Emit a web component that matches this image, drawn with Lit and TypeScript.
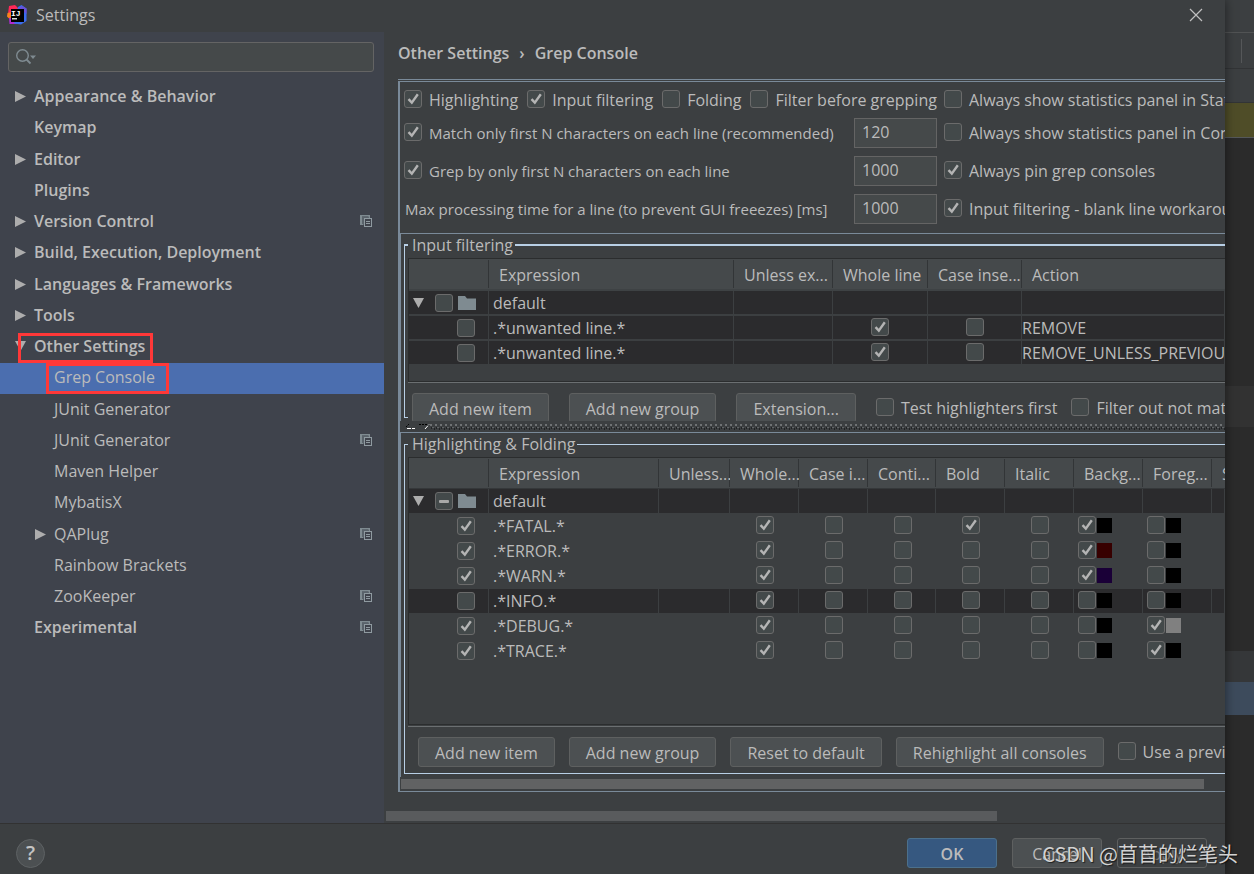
import { LitElement, html, css, svg, nothing } from "lit";
import { customElement } from "lit/decorators.js";
import { classMap } from "lit/directives/class-map.js";

interface TreeItem {
  label: string;
  child?: boolean;
  arrow?: "right" | "down";
  project?: boolean;
  selected?: boolean;
  mark?: "section" | "page";
}

const TREE: TreeItem[] = [
  { label: "Appearance & Behavior", arrow: "right" },
  { label: "Keymap" },
  { label: "Editor", arrow: "right" },
  { label: "Plugins" },
  { label: "Version Control", arrow: "right", project: true },
  { label: "Build, Execution, Deployment", arrow: "right" },
  { label: "Languages & Frameworks", arrow: "right" },
  { label: "Tools", arrow: "right" },
  { label: "Other Settings", arrow: "down", mark: "section" },
  { label: "Grep Console", child: true, selected: true, mark: "page" },
  { label: "JUnit Generator", child: true },
  { label: "JUnit Generator", child: true, project: true },
  { label: "Maven Helper", child: true },
  { label: "MybatisX", child: true },
  { label: "QAPlug", child: true, arrow: "right", project: true },
  { label: "Rainbow Brackets", child: true },
  { label: "ZooKeeper", child: true, project: true },
  { label: "Experimental", project: true },
];

const FILTER_HEADS = ["", "Expression", "Unless ex...", "Whole line", "Case inse...", "Action"];
const FILTER_ROWS = [
  { expression: ".*unwanted line.*", action: "REMOVE" },
  { expression: ".*unwanted line.*", action: "REMOVE_UNLESS_PREVIOUSLY_MATCHED" },
];

const HIGHLIGHT_HEADS = [
  "", "Expression", "Unless...", "Whole...", "Case i...", "Conti...",
  "Bold", "Italic", "Backg...", "Foreg...", "Status...",
];

interface HighlightRow {
  expression: string;
  on: boolean;
  bold?: boolean;
  back?: string;
  fore?: string;
}

const HIGHLIGHT_ROWS: HighlightRow[] = [
  { expression: ".*FATAL.*", on: true, bold: true, back: "#000000" },
  { expression: ".*ERROR.*", on: true, back: "#370000" },
  { expression: ".*WARN.*", on: true, back: "#1a0037" },
  { expression: ".*INFO.*", on: false },
  { expression: ".*DEBUG.*", on: true, fore: "#808080" },
  { expression: ".*TRACE.*", on: true, fore: "#000000" },
];

const arrowIcon = (dir?: "right" | "down") => html`
  <svg class="arrow" width="11" height="11" viewBox="0 0 11 11" aria-hidden="true">
    ${dir === "right"
      ? svg`<path d="M0 0 L11 5.5 L0 11 Z" fill="#adadad" />`
      : dir === "down"
        ? svg`<path d="M0 0 H11 L5.5 10 Z" fill="#adadad" />`
        : nothing}
  </svg>`;

const projectIcon = () => html`
  <svg class="project" width="12" height="12" viewBox="0 0 12 12" aria-hidden="true">
    <path d="M0 0 H10 V3 H8.5 V1.5 H2 V8.5 H3 V10 H0 Z" fill="#7f8b91" />
    <path d="M2 2 H8.5 V3 H4 V10 H3 V8.5 H2 Z" fill="#59626a" />
    <rect x="4.5" y="3.5" width="7" height="8" fill="none" stroke="#8f9aa0" />
    <path d="M6 6.5 H10 M6 8.5 H10" stroke="#8f9aa0" />
  </svg>`;

const folderIcon = html`
  <svg class="folder" width="18" height="14" viewBox="0 0 18 14" aria-hidden="true">
    <path d="M0 0 H7 L9 2.5 H18 V14 H0 Z" fill="#7f8b91" />
  </svg>`;

const logoIcon = html`
  <svg class="logo" width="20" height="20" viewBox="0 0 20 20" aria-hidden="true">
    <path d="M2 1 L8 0 L12 4 L6 12 L1 9 Z" fill="#fe2857" />
    <path d="M0.5 8 L5 7 L6 14 L3 14.5 L0 11.5 Z" fill="#fc801d" />
    <path d="M2 13 L8 12 L10 19 L2.5 19 Z" fill="#b02bd0" />
    <path d="M11 2 L14.5 0 L19.5 3.5 V16 L14 19.5 L7 18.5 Z" fill="#3b6cf0" />
    <path d="M12 3 L15 1 L19.5 3.5 V9 Z" fill="#6a50d8" />
    <rect x="4" y="4" width="13" height="13" fill="#000" />
    <text x="4" y="11" font-family="Liberation Mono, monospace" font-size="8" font-weight="700" fill="#fff">IJ</text>
    <rect x="5" y="13" width="5" height="1.5" fill="#d8d8d8" />
  </svg>`;

@customElement("app-root")
export class AppRoot extends LitElement {
  static styles = css`
    :host {
      display: block;
      font-family: "Open Sans", "Noto Sans", "Noto Sans CJK SC", sans-serif;
      font-size: 16px;
      line-height: 22px;
      color: #bbbbbb;
    }
    * { box-sizing: border-box; }
    .stage {
      position: relative;
      display: grid;
      grid-template-columns: minmax(0, 1fr) 29px;
      min-height: 100vh;
      background: #2b2b2b;
      overflow: hidden;
    }
    .dialog {
      display: flex;
      flex-direction: column;
      background: #3c3f41;
      z-index: 1;
      box-shadow: 0 0 10px rgba(0, 0, 0, 0.5);
    }

    .titlebar {
      display: flex;
      align-items: center;
      height: 32px;
      padding: 0 22px 2px 7px;
      gap: 9px;
      flex: none;
    }
    .titlebar h1 { flex: 1; margin: 0; font-size: 16px; font-weight: 400; }
    .close { border: 0; background: none; padding: 0; width: 14px; height: 14px; display: block; }
    .close svg { display: block; }

    .body { flex: 1; display: flex; min-height: 0; }
    .sidebar { width: 384px; flex: none; background: #3f434c; padding-top: 10px; }
    .search {
      display: flex;
      align-items: center;
      height: 30px;
      margin: 0 10px 10px 8px;
      padding-left: 7px;
      border: 1px solid #646464;
      border-radius: 3px;
      background: #45494a;
    }
    .search input { flex: 1; min-width: 0; border: 0; outline: 0; background: none; color: inherit; font: inherit; }

    .tree { list-style: none; margin: 0; padding: 0; }
    .node {
      position: relative;
      display: flex;
      align-items: center;
      gap: 8px;
      height: 31px;
      padding: 0 12px 3px 15px;
      font-weight: 600;
    }
    .node:nth-child(4n + 3) { margin-top: 1px; }
    .node.child { padding-left: 35px; font-weight: 400; }
    .node.selected { background: #4b6eaf; }
    .node .text { flex: 1; }
    .mark { position: absolute; border: 3px solid #ff3838; }
    .mark.section { left: 18px; top: 1px; width: 135px; height: 30px; }
    .mark.page { left: 46px; top: 0; width: 123px; height: 31px; }

    .content { flex: 1; min-width: 0; display: flex; flex-direction: column; }
    .crumbs {
      display: flex;
      gap: 10px;
      height: 47px;
      padding: 10px 0 0 14px;
      font-weight: 600;
    }
    .frame {
      flex: 1;
      display: flex;
      flex-direction: column;
      margin-left: 14px;
      border-top: 1px solid #7a8a99;
      padding-top: 1px;
      white-space: nowrap;
      overflow: hidden;
    }
    .inner {
      flex: 1;
      display: flex;
      flex-direction: column;
      border: solid #7a8a99;
      border-width: 1px 0 1px 2px;
    }

    .check {
      appearance: none;
      flex: none;
      display: block;
      width: 18px;
      height: 18px;
      margin: 0;
      border: 1px solid #6b6b6b;
      border-radius: 3px;
      background: #43494a center / 16px 16px no-repeat;
    }
    .check:checked {
      background-image: url("data:image/svg+xml,%3Csvg xmlns='http://www.w3.org/2000/svg' viewBox='0 0 16 16'%3E%3Cpath d='M3.5 8.2 L6.8 11.6 L12.8 3.2' fill='none' stroke='%23b4b4b4' stroke-width='2.4'/%3E%3C/svg%3E");
    }
    .check:indeterminate {
      background-image: url("data:image/svg+xml,%3Csvg xmlns='http://www.w3.org/2000/svg' viewBox='0 0 16 16'%3E%3Crect x='3' y='7' width='10' height='3' rx='1' fill='%23a8a8a8'/%3E%3C/svg%3E");
    }
    .option { display: flex; align-items: center; gap: 7px; }
    .option .check { margin-bottom: 2px; }

    .options {
      display: grid;
      grid-template-columns: 443px 83px minmax(0, 1fr);
      grid-template-rows: 28px;
      grid-auto-rows: 30px;
      gap: 8px 7px;
      align-items: center;
      padding: 0 0 9px 4px;
    }
    .options .wide { grid-column: span 2; display: flex; gap: 9px; padding-top: 7px; }
    .options .wide + .option { padding-top: 7px; }
    .options .small { font-size: 15px; }
    .options .plain { padding-left: 1px; }
    .number {
      width: 83px;
      height: 30px;
      padding: 0 7px 2px;
      border: 1px solid #646464;
      outline: 0;
      background: #45494a;
      color: inherit;
      font: inherit;
    }

    .panel {
      display: flex;
      flex-direction: column;
      border: solid #7a8a99;
      border-width: 1px 0 0 1px;
      padding-left: 3px;
      overflow: hidden;
    }
    .panel.upper { height: 188px; flex: none; }
    .panel.lower { flex: 1; padding-bottom: 3px; }
    fieldset {
      display: flex;
      flex-direction: column;
      min-width: 0;
      margin: 0;
      padding: 0 0 0 3px;
      border: solid #b8cfe5;
      border-width: 1px 0 1px 1px;
    }
    .upper fieldset { height: 184px; border-top-width: 2px; }
    .lower fieldset { flex: 1; }
    legend { margin: 0; padding: 0 2px 0 4px; }

    .grid-box {
      margin-top: 2px;
      border: solid #2b2d2e;
      border-width: 1px 0 1px 1px;
      overflow: hidden;
      flex: none;
    }
    .upper .grid-box { height: 124px; }
    .lower .grid-box { flex: 1; }
    table { width: 100%; table-layout: fixed; border-collapse: separate; border-spacing: 0; }
    th {
      height: 31px;
      padding: 2px 0 0 10px;
      font-weight: 400;
      text-align: left;
      overflow: hidden;
      background: linear-gradient(#323537, #323537) right 1px / 1px 28px no-repeat, #45494b;
      border-bottom: 1px solid #35383a;
    }
    th:last-child { background: #45494b; }
    .upper th { height: 32px; border-bottom: 2px solid #3e4244; }
    td {
      height: 25px;
      padding: 0 0 1px;
      overflow: hidden;
      border-right: 1px solid #3c3f41;
      border-bottom: 1px solid #3c3f41;
    }
    .upper td, .lower .dark td { background: #2b2b2d; }
    .upper td { border-bottom-width: 2px; padding: 0; }
    .upper td, .lower td.name { line-height: 22px; }
    td.name, .upper td.name { padding-left: 4px; }
    td > .check { margin: 0 auto 2px; }
    .lower td > .check { margin: 0 auto 2px 26px; }
    .lead { display: flex; align-items: center; padding: 1px 0 0 4px; }
    .lead .check { margin: 0 5px 0 11px; }
    .lead.leaf { padding-left: 48px; }
    .lead.leaf .check { margin: 0; }
    .tone { display: flex; align-items: center; gap: 1px; padding: 0 0 1px 4px; }
    .swatch { width: 15px; height: 15px; }

    .actions {
      display: flex;
      align-items: center;
      background: #3c3f41;
      border-top: 1px solid #6b6f71;
      padding-top: 10px;
      flex: none;
    }
    .upper .actions { gap: 20px; padding-left: 4px; }
    .upper .actions .option + .option { margin-left: -6px; }
    .lower .actions { gap: 14px; margin-top: 1px; padding: 10px 0 6px 10px; }
    .button {
      flex: none;
      height: 30px;
      padding: 2px 16px 0;
      border: 1px solid #5e6060;
      border-radius: 3px;
      background: #4c5052;
      color: inherit;
      font: inherit;
    }

    .splitter { display: flex; height: 11px; flex: none; padding: 3px 0 2px 4px; }
    .bumps {
      flex: 1;
      height: 6px;
      background: url("data:image/svg+xml,%3Csvg xmlns='http://www.w3.org/2000/svg' width='5' height='6' shape-rendering='crispEdges'%3E%3Cpath d='M0 0h2v2h-2z' fill='%236f7274'/%3E%3Cpath d='M2 3h2v1h-2z' fill='%23616466'/%3E%3Cpath d='M1 3h1v2h-1zM4 4h1v2h-1z' fill='%23202224'/%3E%3C/svg%3E");
    }

    .thumb { height: 10px; background: #616263; }
    .thumb.inside { margin: 2px 21px 2px 1px; }
    .thumb.outside { width: 611px; max-width: 73%; margin: 19px 0 2px 2px; background: #595b5d; }

    .footer {
      display: flex;
      align-items: center;
      gap: 15px;
      height: 51px;
      flex: none;
      padding: 8px 18px 0 16px;
      border-top: 1px solid #323232;
    }
    .help {
      width: 29px;
      height: 29px;
      margin-right: auto;
      padding: 0;
      border: 1px solid #5e6264;
      border-radius: 50%;
      background: #4c5052;
      color: #c4c4c4;
      font: inherit;
      font-size: 20px;
      font-weight: 600;
      line-height: 26px;
    }
    .footer .button { width: 90px; padding: 2px 0 0; }
    .button.primary { background: #365880; border-color: #4c708c; font-weight: 600; }
    .button:disabled { background: #3c3f41; color: #777777; }

    .ide { display: flex; flex-direction: column; }
    .band { flex: none; border-bottom: 1px solid #323436; background: #3c3f41; }
    .band.menu { height: 33px; border-color: #515354; }
    .band.tools { height: 36px; padding: 6px 0 0 16px; }
    .band.tools i { display: block; width: 1px; height: 24px; background: #555759; }
    .band.tabs { height: 34px; }
    .band.tab { height: 35px; background: #4f4d28; border-color: #55585a; }
    .band.gap { height: 248px; background: none; border: 0; }
    .band.line { height: 41px; background: #323232; border: 0; }
    .band.code { height: 224px; background: none; border: 0; }
    .band.head { height: 31px; background: #353739; border: 0; }
    .band.row { height: 33px; background: #3d4b5c; border: 0; }

    .watermark {
      position: absolute;
      right: 16px;
      bottom: 6px;
      z-index: 2;
      margin: 0;
      font-family: "Noto Sans CJK SC", sans-serif;
      font-size: 20px;
      line-height: 28px;
      color: #d2d2d2;
      text-shadow: 1px 1px 1px rgba(0, 0, 0, 0.6);
      white-space: nowrap;
    }
  `;

  private check(label: string, on = false, mixed = false) {
    return html`<input class="check" type="checkbox" aria-label=${label} .checked=${on} .indeterminate=${mixed} />`;
  }

  private option(label: string, on = false, small = false) {
    return html`<label class=${classMap({ option: true, small })}>
      <input class="check" type="checkbox" .checked=${on} />${label}
    </label>`;
  }

  private columns(widths: number[]) {
    return html`<colgroup>${widths.map((w) => html`<col style="width:${w}px" />`)}<col /></colgroup>`;
  }

  private tone(label: string, color?: string) {
    return html`<div class="tone">
      ${this.check(label, color !== undefined)}
      <span class="swatch" style="background:${color ?? "#000000"}"></span>
    </div>`;
  }

  private renderNode(n: TreeItem) {
    return html`<li class=${classMap({ node: true, child: !!n.child, selected: !!n.selected })}>
      ${arrowIcon(n.arrow)}
      <span class="text">${n.label}</span>
      ${n.project ? projectIcon() : nothing}
      ${n.mark ? html`<span class="mark ${n.mark}"></span>` : nothing}
    </li>`;
  }

  private renderFilters() {
    return html`<table>
      ${this.columns([80, 245, 99, 95, 94])}
      <thead><tr>${FILTER_HEADS.map((h) => html`<th>${h}</th>`)}</tr></thead>
      <tbody>
        <tr>
          <td><div class="lead">${arrowIcon("down")}${this.check("default")}${folderIcon}</div></td>
          <td class="name">default</td><td></td><td></td><td></td><td></td>
        </tr>
        ${FILTER_ROWS.map((r) => html`<tr>
          <td><div class="lead leaf">${this.check("Enabled")}</div></td>
          <td class="name">${r.expression}</td>
          <td></td>
          <td>${this.check("Whole line", true)}</td>
          <td>${this.check("Case insensitive")}</td>
          <td>${r.action}</td>
        </tr>`)}
      </tbody>
    </table>`;
  }

  private renderHighlights() {
    return html`<table>
      ${this.columns([80, 170, 71, 69, 69, 68, 69, 69, 69, 69])}
      <thead><tr>${HIGHLIGHT_HEADS.map((h) => html`<th>${h}</th>`)}</tr></thead>
      <tbody>
        <tr class="dark">
          <td><div class="lead">${arrowIcon("down")}${this.check("default", false, true)}${folderIcon}</div></td>
          <td class="name">default</td>
          ${HIGHLIGHT_HEADS.slice(2).map(() => html`<td></td>`)}
        </tr>
        ${HIGHLIGHT_ROWS.map((r) => html`<tr class=${r.on ? "" : "dark"}>
          <td><div class="lead leaf">${this.check("Enabled", r.on)}</div></td>
          <td class="name">${r.expression}</td>
          <td></td>
          <td>${this.check("Whole line", true)}</td>
          <td>${this.check("Case insensitive")}</td>
          <td>${this.check("Continue matching")}</td>
          <td>${this.check("Bold", !!r.bold)}</td>
          <td>${this.check("Italic")}</td>
          <td>${this.tone("Background", r.back)}</td>
          <td>${this.tone("Foreground", r.fore)}</td>
          <td></td>
        </tr>`)}
      </tbody>
    </table>`;
  }

  render() {
    return html`<div class="stage">
      <section class="dialog">
        <header class="titlebar">
          ${logoIcon}
          <h1>Settings</h1>
          <button class="close" aria-label="Close">
            <svg width="14" height="14" viewBox="0 0 14 14"><path d="M1 1 L13 13 M13 1 L1 13" stroke="#c0c0c0" stroke-width="1.2" /></svg>
          </button>
        </header>

        <div class="body">
          <nav class="sidebar">
            <label class="search">
              <svg width="21" height="16" viewBox="0 0 21 16" aria-hidden="true">
                <circle cx="6.5" cy="6.5" r="5.8" fill="none" stroke="#7f8b91" stroke-width="1.4" />
                <path d="M10.5 10.5 L14.5 14.5" stroke="#7f8b91" stroke-width="1.8" />
                <path d="M14 6.5 H20 L17 10 Z" fill="#7f8b91" />
              </svg>
              <input type="text" aria-label="Search settings" />
            </label>
            <ul class="tree">${TREE.map((n) => this.renderNode(n))}</ul>
          </nav>

          <main class="content">
            <div class="crumbs"><span>Other Settings</span><span>›</span><span>Grep Console</span></div>
            <div class="frame">
              <div class="inner">
                <div class="options">
                  <div class="wide">
                    ${this.option("Highlighting", true)}
                    ${this.option("Input filtering", true)}
                    ${this.option("Folding")}
                    ${this.option("Filter before grepping")}
                  </div>
                  ${this.option("Always show statistics panel in Status bar")}
                  ${this.option("Match only first N characters on each line (recommended)", true, true)}
                  <input class="number" type="text" aria-label="Match length" value="120" />
                  ${this.option("Always show statistics panel in Console")}
                  ${this.option("Grep by only first N characters on each line", true, true)}
                  <input class="number" type="text" aria-label="Grep length" value="1000" />
                  ${this.option("Always pin grep consoles", true)}
                  <label class="plain small" for="time">Max processing time for a line (to prevent GUI freeezes) [ms]</label>
                  <input class="number" id="time" type="text" value="1000" />
                  ${this.option("Input filtering - blank line workaround", true)}
                </div>

                <div class="panel upper">
                  <fieldset>
                    <legend>Input filtering</legend>
                    <div class="grid-box">${this.renderFilters()}</div>
                    <div class="actions">
                      <button class="button">Add new item</button>
                      <button class="button">Add new group</button>
                      <button class="button">Extension...</button>
                      ${this.option("Test highlighters first")}
                      ${this.option("Filter out not matched lines")}
                    </div>
                  </fieldset>
                </div>

                <div class="splitter">
                  <svg width="26" height="6" viewBox="0 0 26 6" aria-hidden="true">
                    <path d="M2 3 L5 0 M15 0.5 H24" stroke="#000" fill="none" stroke-dasharray="2 1" />
                    <path d="M3 4.5 H11 M21 5 L25 0.5" stroke="#fff" fill="none" stroke-dasharray="4 1" />
                  </svg>
                  <div class="bumps"></div>
                </div>

                <div class="panel lower">
                  <fieldset>
                    <legend>Highlighting &amp; Folding</legend>
                    <div class="grid-box">${this.renderHighlights()}</div>
                    <div class="actions">
                      <button class="button">Add new item</button>
                      <button class="button">Add new group</button>
                      <button class="button">Reset to default</button>
                      <button class="button">Rehighlight all consoles</button>
                      ${this.option("Use a preview")}
                    </div>
                  </fieldset>
                </div>
                <div class="thumb inside"></div>
              </div>
            </div>
            <div class="thumb outside"></div>
          </main>
        </div>

        <footer class="footer">
          <button class="help" aria-label="Help">?</button>
          <button class="button primary">OK</button>
          <button class="button">Cancel</button>
          <button class="button" disabled>Apply</button>
        </footer>
      </section>

      <aside class="ide" aria-hidden="true">
        <div class="band menu"></div>
        <div class="band tools"><i></i></div>
        <div class="band tabs"></div>
        <div class="band tab"></div>
        <div class="band gap"></div>
        <div class="band line"></div>
        <div class="band code"></div>
        <div class="band head"></div>
        <div class="band row"></div>
      </aside>

      <p class="watermark">CSDN @苜苜的烂笔头</p>
    </div>`;
  }
}
